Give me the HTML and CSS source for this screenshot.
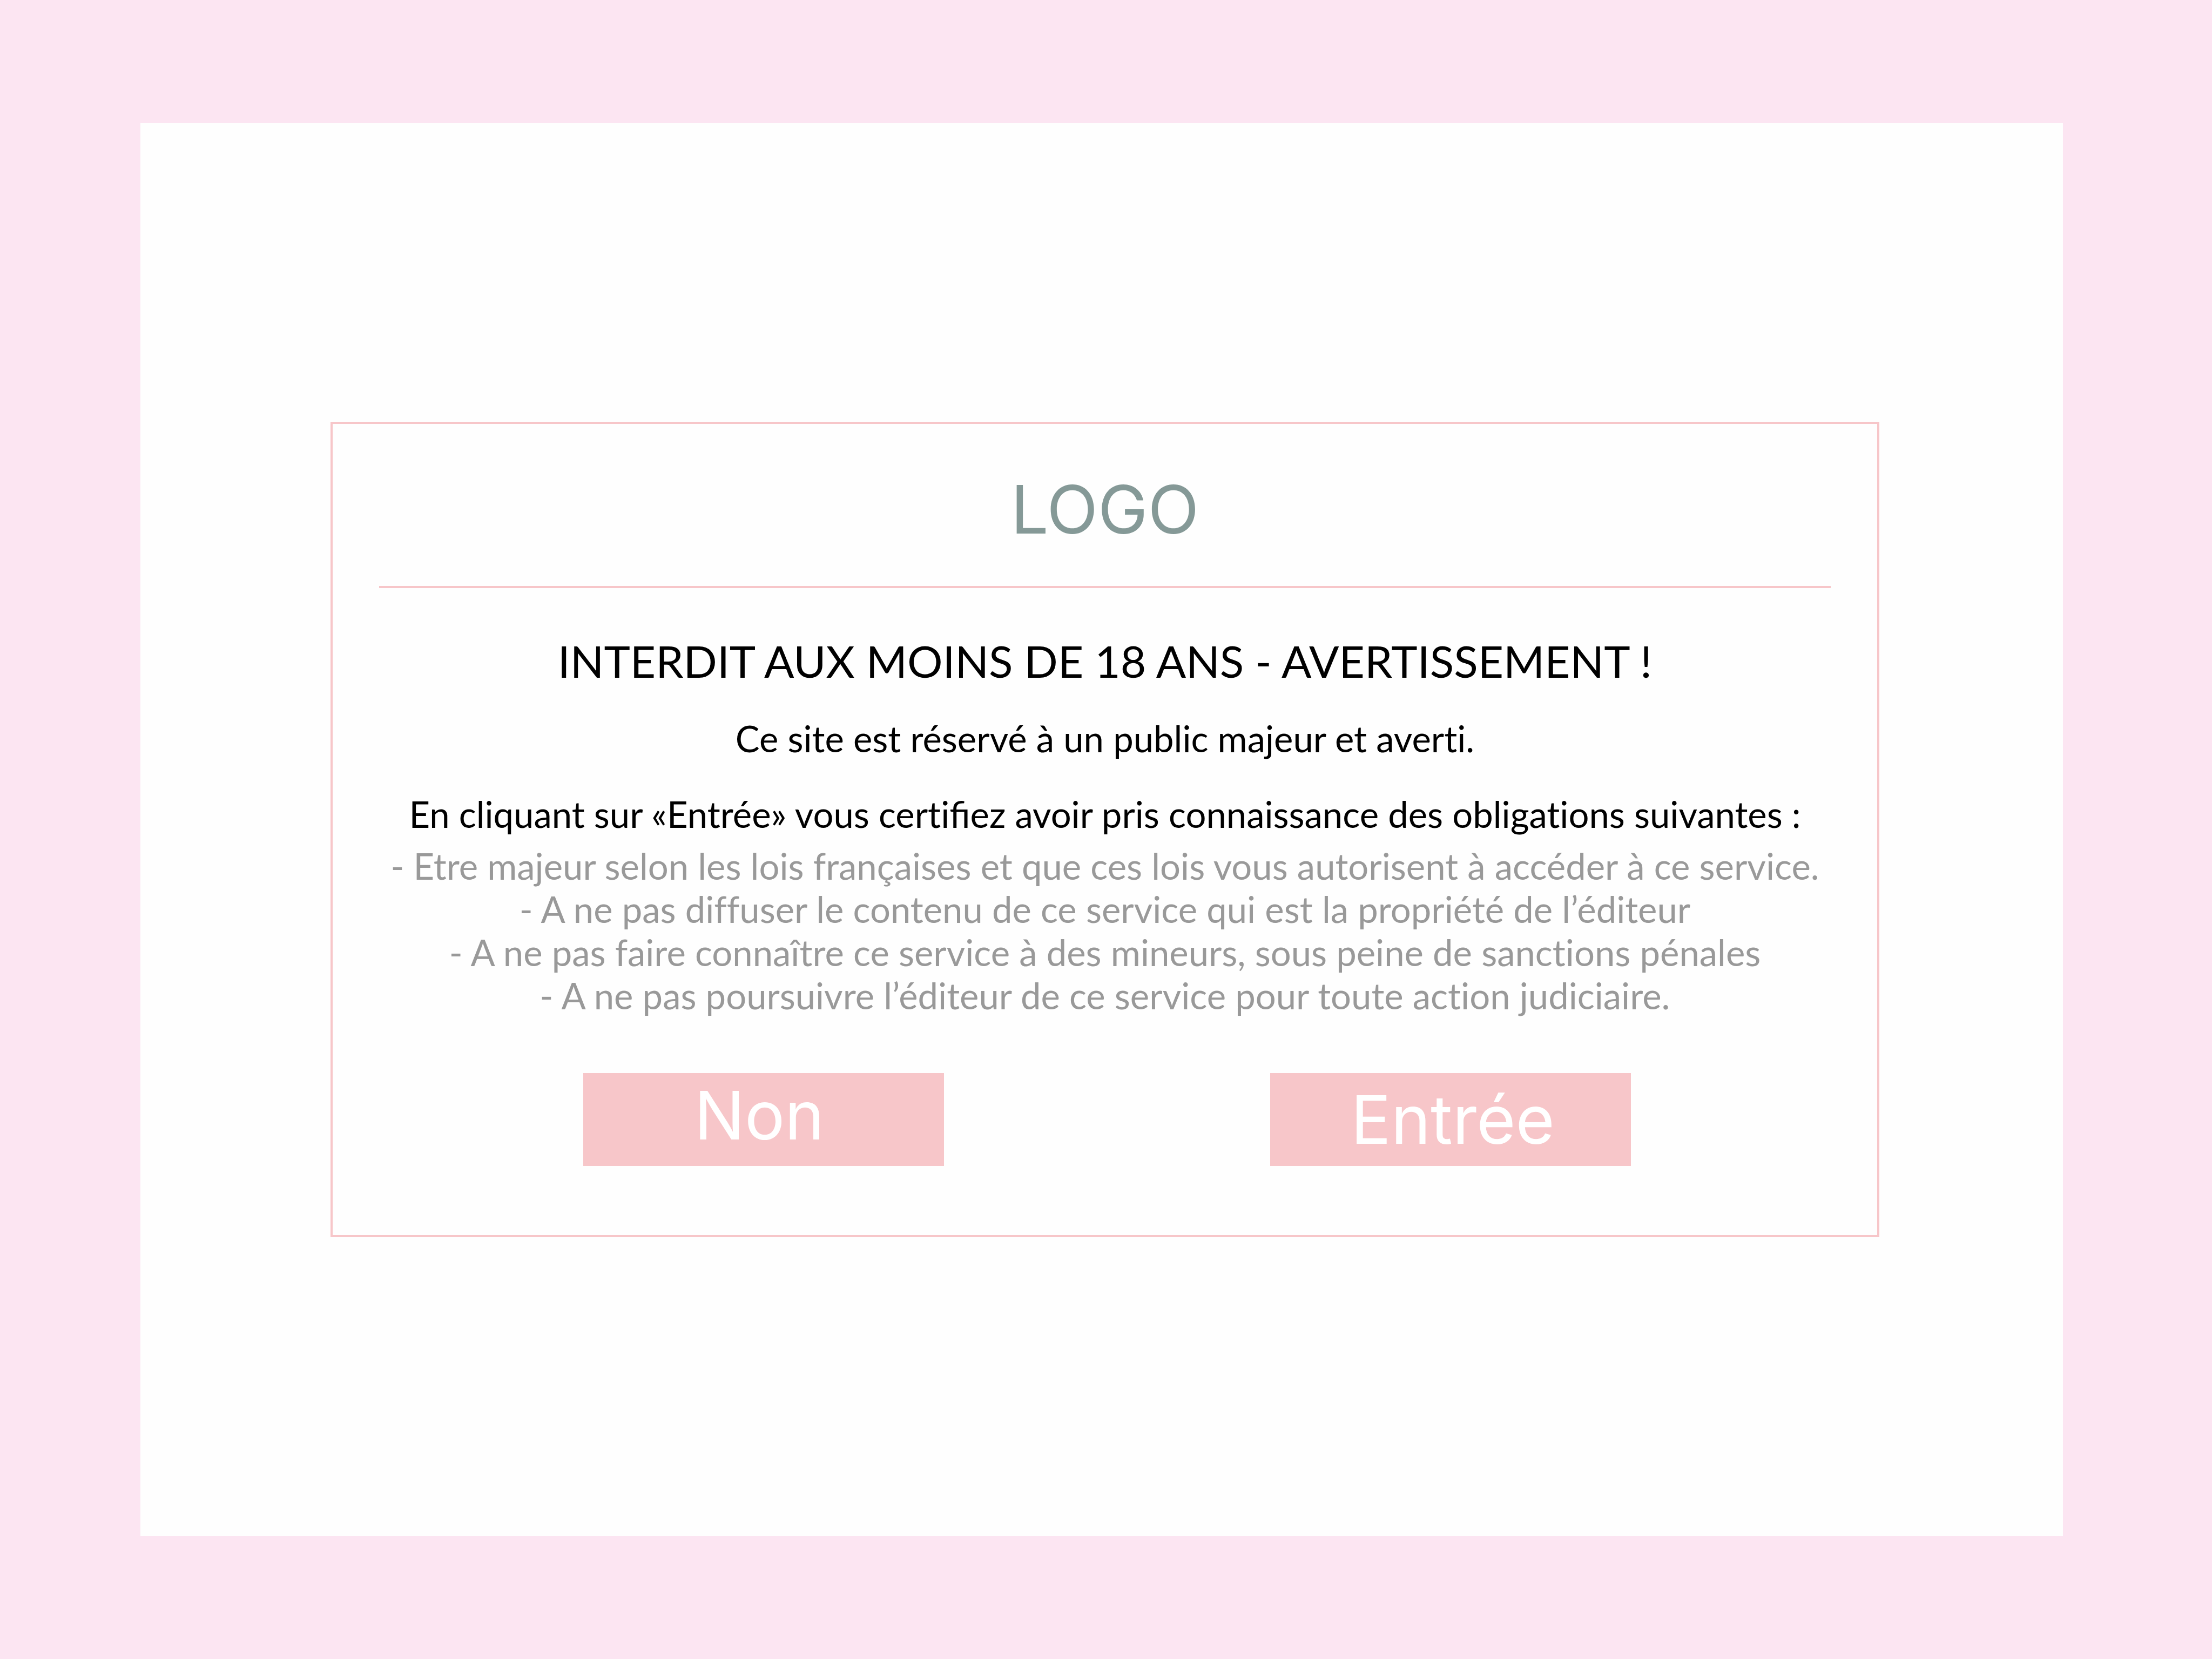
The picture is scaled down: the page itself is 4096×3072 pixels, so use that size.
FILE: index.html
```html
<!DOCTYPE html>
<html lang="fr">
<head>
  <meta charset="utf-8">
  <title>Avertissement</title>
  <link rel="stylesheet" href="styles.css">
</head>
<body class="page">
  <main class="stage">
    <section class="card">
      <header class="logo">LOGO</header>
      <hr class="rule">
      <h1 class="title">INTERDIT AUX MOINS DE 18 ANS - AVERTISSEMENT !</h1>
      <p class="lead">Ce site est réservé à un public majeur et averti.</p>
      <p class="intro">En cliquant sur «Entrée» vous certi<span class="ligature">fi</span>ez avoir pris connaissance des obligations suivantes :</p>
      <ul class="terms">
        <li>- Etre majeur selon les lois françaises et que ces lois vous autorisent à accéder à ce service.</li>
        <li>- A ne pas diffuser le contenu de ce service qui est la propriété de l’éditeur</li>
        <li>- A ne pas faire connaître ce service à des mineurs, sous peine de sanctions pénales</li>
        <li>- A ne pas poursuivre l’éditeur de ce service pour toute action judiciaire.</li>
      </ul>
      <div class="actions">
        <button type="button" class="button button-leave">Non</button>
        <button type="button" class="button button-enter">Entrée</button>
      </div>
    </section>
  </main>
</body>
</html>
```
FILE: styles.css
```css
* {
  box-sizing: border-box;
  margin: 0;
  padding: 0;
}

.page {
  display: flex;
  min-height: 100vh;
  padding: 228px 276px 228px 260px;
  background: #fce5f2;
  font-family: Lato, sans-serif;
  font-variant-ligatures: no-common-ligatures;
}

.stage {
  display: flex;
  flex: 1;
  align-items: center;
  padding: 0 340px 0 352px;
  background: #fefefe;
}

.card {
  flex: 1;
  padding: 86px 86px 128px 86px;
  border: 4px solid #f7c6c9;
  color: #000;
  font-size: 67px;
  line-height: 80px;
  text-align: center;
}

.logo {
  color: #859997;
  font-family: Inter, sans-serif;
  font-size: 124px;
  font-variation-settings: "opsz" 14;
  line-height: 144px;
}

.rule {
  height: 4px;
  margin: 70px 0 86px;
  border: 0;
  background: #f7c6c9;
}

.title {
  margin-bottom: 56px;
  font-size: 82px;
  font-weight: 400;
  line-height: 96px;
}

.lead {
  margin-bottom: 60px;
}

.intro {
  margin-bottom: 16px;
}

.ligature {
  font-variant-ligatures: common-ligatures;
}

.terms {
  color: #999;
  list-style: none;
}

.actions {
  display: flex;
  justify-content: center;
  gap: 604px;
  margin-top: 104px;
  padding-left: 8px;
}

.button {
  width: 668px;
  height: 172px;
  border: 0;
  background: #f7c6c9;
  color: #fff;
  font-family: Inter, sans-serif;
  font-size: 124px;
  font-variation-settings: "opsz" 14;
  line-height: 144px;
}

.button-leave {
  padding: 0 16px 16px 0;
}

.button-enter {
  padding-left: 8px;
}
```
